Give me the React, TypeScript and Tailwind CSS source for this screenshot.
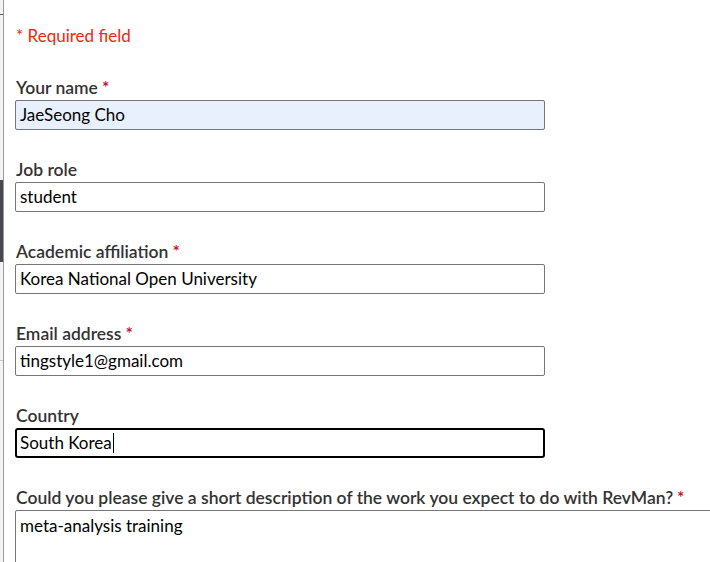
export default function App() {
  const fields = [
    { label: "Your name", required: true, value: "JaeSeong Cho", autofill: true },
    { label: "Job role", required: false, value: "student" },
    { label: "Academic affiliation", required: true, value: "Korea National Open University" },
    { label: "Email address", required: true, value: "tingstyle1@gmail.com" },
    { label: "Country", required: false, value: "South Korea", focused: true },
  ]

  return (
    <div className="flex h-[562px] w-[710px] overflow-hidden bg-white font-['Lato',sans-serif]">
      {/* left edge of the window behind */}
      <div className="flex w-[4px] flex-shrink-0 flex-col border-r border-[#9a9a9a] bg-[#f3f3f3]">
        <div className="mt-[14px] h-px w-[3px] bg-[#555]" />
        <div className="mt-[165px] h-[82px] bg-[#45484c]" />
        <div className="mt-[98px] h-px bg-[#c8c8c8]" />
      </div>

      <main className="flex-1 pl-[11px] pt-6">
        <p className="h-6 pl-px text-[17px] leading-6 text-[#f0280c]">* Required field</p>

        {fields.map((f) => (
          <div key={f.label} className="mt-7">
            <label className="block h-6 pl-px text-[17.5px] font-semibold leading-6 text-[#333]">
              {f.label}
              {f.required && <span className="ml-1 text-[#c8102e]">*</span>}
            </label>
            <div
              className={
                f.focused
                  ? "flex h-[30px] w-[530px] items-center rounded-[3px] border-2 border-black bg-white pl-[3px] text-[17px] text-black"
                  : f.autofill
                  ? "flex h-[30px] w-[530px] items-center rounded-[2px] border border-[#767676] bg-[#e8f0fe] pl-1 text-[17px] text-black"
                  : "flex h-[30px] w-[530px] items-center rounded-[2px] border border-[#767676] bg-white pl-1 text-[17px] text-black"
              }
            >
              {f.value}
              {f.focused && <span className="ml-px h-[20px] w-px bg-black" />}
            </div>
          </div>
        ))}

        <div className="mt-7">
          <label className="block h-6 whitespace-nowrap pl-px text-[17.5px] font-semibold leading-6 text-[#333]">
            Could you please give a short description of the work you expect to do with RevMan?
            <span className="ml-1 text-[#c8102e]">*</span>
          </label>
          <div className="h-[80px] w-[720px] rounded-[2px] border border-[#767676] bg-white px-1 pt-[3px] text-[17px] leading-6 text-black">
            meta-analysis training
          </div>
        </div>
      </main>
    </div>
  )
}
